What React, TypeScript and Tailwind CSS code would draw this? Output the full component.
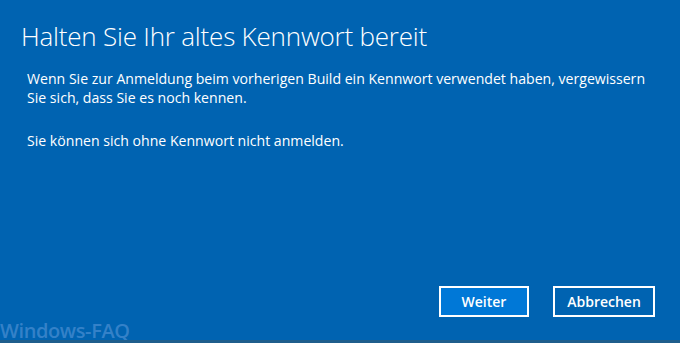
export default function App() {
  return (
    <div className="relative flex flex-col w-[680px] h-[343px] bg-[#0063b1] text-white overflow-hidden" style={{ fontFamily: '"Open Sans", "Noto Sans", sans-serif' }}>
      <h1 className="pl-[21px] pt-[18px] text-[26px] leading-[36px] font-light tracking-[-0.2px]">
        Halten Sie Ihr altes Kennwort bereit
      </h1>
      <div className="pl-[27px] pr-[26px] pt-[15px] text-[14.1px] leading-[19px]">
        <p>
          Wenn Sie zur Anmeldung beim vorherigen Build ein Kennwort verwendet haben, vergewissern Sie sich, dass Sie es noch kennen.
        </p>
        <p className="mt-[24px]">Sie können sich ohne Kennwort nicht anmelden.</p>
      </div>
      <div className="mt-auto flex justify-end gap-[24px] pr-[25px] pb-[26px]">
        <button className="w-[90px] h-[31px] border-2 border-white bg-[#0078d7] text-[14px] font-semibold">
          Weiter
        </button>
        <button className="w-[102px] h-[31px] border-2 border-white bg-[#0063b1] text-[14px] font-semibold">
          Abbrechen
        </button>
      </div>
      <div className="absolute left-0 bottom-[1px] text-[20px] leading-[22px] font-semibold tracking-[-0.4px] text-[#4a8fd3] opacity-70">
        Windows-FAQ
      </div>
      <div className="absolute left-0 right-0 bottom-0 h-[3px] bg-[#1f5e8c]" />
    </div>
  );
}
